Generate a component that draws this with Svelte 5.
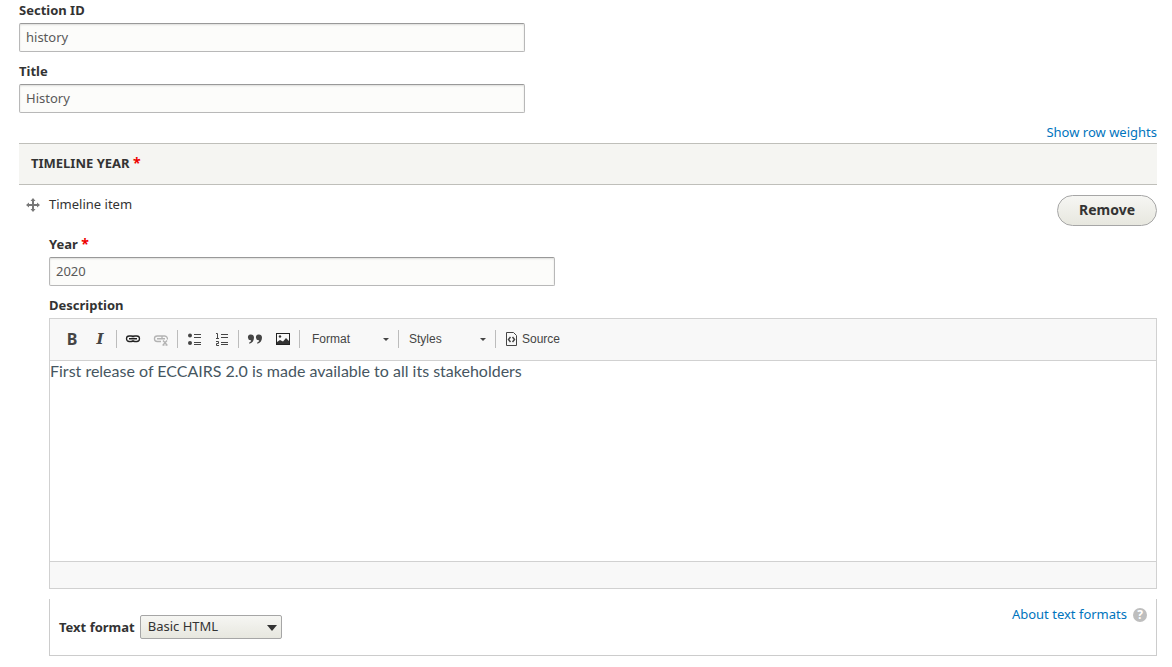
<script>
  let sectionId = $state("history");
  let title = $state("History");
  let year = $state("2020");
  let description = $state("First release of ECCAIRS 2.0 is made available to all its stakeholders");
  let textFormat = $state("Basic HTML");
</script>

<main class="form">
  <div class="field">
    <label for="section-id">Section ID</label>
    <input id="section-id" type="text" bind:value={sectionId} />
  </div>
  <div class="field">
    <label for="title">Title</label>
    <input id="title" type="text" bind:value={title} />
  </div>

  <div class="weights"><a href="#weights">Show row weights</a></div>

  <section>
    <h4 class="table-head">TIMELINE YEAR <span class="required">*</span></h4>
    <div class="row">
      <a class="handle" href="#drag" aria-label="Drag to re-order">
        <svg width="14" height="14" viewBox="0 0 14 14">
          <path fill="#787878" d="M7 0l2.500 3H8v3h3V4.500L14 7l-3 2.500V8H8v3h1.500L7 14l-2.500-3H6V8H3v1.500L0 7l3-2.500V6h3V3H4.500z" />
        </svg>
      </a>
      <div class="item">
        <div class="item-head">
          <span>Timeline item</span>
          <button type="button" class="remove">Remove</button>
        </div>

        <div class="field">
          <label for="year">Year <span class="required">*</span></label>
          <input id="year" type="text" bind:value={year} />
        </div>

        <div class="field">
          <label for="description">Description</label>
          <div class="editor">
            <div class="toolbar">
              <button type="button" class="tool bold" aria-label="Bold">B</button>
              <button type="button" class="tool italic" aria-label="Italic">I</button>
              <span class="separator"></span>
              <button type="button" class="tool" aria-label="Link">
                <svg width="16" height="16" viewBox="0 0 16 16" fill="none">
                  <rect x="1.500" y="5" width="7.500" height="5.500" rx="2.700" stroke="#222" stroke-width="1.300" />
                  <rect x="7" y="5" width="7.500" height="5.500" rx="2.700" stroke="#222" stroke-width="1.300" />
                  <path d="M4 7.750h8" stroke="#f8f8f8" stroke-width="3" />
                  <path d="M4 7.750h8" stroke="#111" stroke-width="1.400" />
                </svg>
              </button>
              <button type="button" class="tool" aria-label="Unlink" disabled>
                <svg width="16" height="16" viewBox="0 0 16 16" fill="none" stroke="#b3b3b3">
                  <path d="M8.500 5H4.200a2.750 2.750 0 0 0 0 5.500H8M7.500 5h4.300a2.750 2.750 0 0 1 2.500 3.500" stroke-width="1.300" />
                  <path d="M4 7.750h8M9 5v2" stroke-width="1.300" />
                  <path d="M10 9.500l4 4.500M14 9.500l-4 4.500M9.500 14h2M12.500 14h2" stroke-width="1.300" />
                </svg>
              </button>
              <span class="separator"></span>
              <button type="button" class="tool" aria-label="Bulleted list">
                <svg width="16" height="16" viewBox="0 0 16 16" fill="#454545">
                  <circle cx="4" cy="4.500" r="2" />
                  <circle cx="4" cy="12" r="2" />
                  <path d="M8 3h7v1H8zM8 6h7v1H8zM8 11h7v1H8zM8 13h7v1H8z" />
                </svg>
              </button>
              <button type="button" class="tool" aria-label="Numbered list">
                <svg width="16" height="16" viewBox="0 0 16 16">
                  <path d="M2 2.500h1.500V7M2 7.500h3M2 10.500h2.500v2h-2v2H5" fill="none" stroke="#454545" />
                  <path d="M7 3h7v1H7zM7 6h7v1H7zM7 11h7v1H7zM7 13h7v1H7z" fill="#454545" />
                </svg>
              </button>
              <span class="separator"></span>
              <button type="button" class="tool" aria-label="Block quote">
                <svg width="16" height="16" viewBox="0 0 16 16" fill="#454545">
                  <path d="M3.500 3.500C5.500 3.300 7 4.500 7 6.500c0 3-1.500 5.300-4.500 6.300l-.5-1c1.400-.6 2-1.500 2.200-2.500A2.900 2.900 0 0 1 3.500 3.500z" />
                  <path d="M11.500 3.500C13.500 3.300 15 4.500 15 6.500c0 3-1.500 5.300-4.500 6.300l-.5-1c1.400-.6 2-1.500 2.200-2.500A2.900 2.900 0 0 1 11.500 3.500z" />
                </svg>
              </button>
              <button type="button" class="tool" aria-label="Image">
                <svg width="16" height="16" viewBox="0 0 16 16">
                  <rect x="1.500" y="2.500" width="13" height="11" fill="#f8f8f8" stroke="#222" />
                  <path d="M2 13v-2l3-2 3 1.500L11 7l3 3v3z" fill="#333" />
                  <circle cx="5" cy="5.500" r="1.200" fill="#333" />
                </svg>
              </button>
              <span class="separator"></span>
              <span class="combo format">
                <select aria-label="Format"><option>Format</option></select>
              </span>
              <span class="separator"></span>
              <span class="combo">
                <select aria-label="Styles"><option>Styles</option></select>
              </span>
              <span class="separator"></span>
              <button type="button" class="tool source">
                <svg width="16" height="16" viewBox="0 0 16 16" fill="none" stroke="#454545">
                  <path d="M2.500 1.500h7l3 3v10h-10z" />
                  <path d="M6.500 6l-2 2.500 2 2.500M8.500 6l2 2.500-2 2.500" stroke-width="1.500" />
                </svg>
                Source
              </button>
            </div>
            <textarea id="description" spellcheck="false" bind:value={description}></textarea>
            <div class="status"></div>
          </div>
        </div>

        <div class="filter">
          <div class="format-field">
            <label for="text-format">Text format</label>
            <span class="select">
              <select id="text-format" bind:value={textFormat}>
                <option>Basic HTML</option>
                <option>Full HTML</option>
              </select>
            </span>
          </div>
          <a class="about" href="#formats">
            About text formats
            <span class="help">?</span>
          </a>
        </div>
      </div>
    </div>
  </section>
</main>

<style>
  :global(body) {
    margin: 0;
    background: #fff;
  }

  .form {
    padding: 0 15px 11px 19px;
    color: #333;
    font: 13px/21px "Noto Sans", "Open Sans", sans-serif;
  }

  .field {
    display: flex;
    flex-direction: column;
    gap: 2px;
    margin-bottom: 9px;
  }

  label {
    font-weight: 700;
  }

  input {
    box-sizing: border-box;
    width: 506px;
    max-width: 100%;
    height: 29px;
    padding: 0 6px 2px;
    border: 1px solid #b8b8b8;
    border-top-color: #999;
    border-radius: 2px;
    background: #fcfcfa;
    box-shadow: inset 0 1px 2px rgba(0, 0, 0, 0.125);
    color: #595959;
    font: inherit;
  }

  a {
    color: #0074bd;
    text-decoration: none;
  }

  .weights {
    text-align: right;
  }

  .required {
    color: #ee0000;
    font-size: 14px;
    line-height: 16px;
  }

  .table-head {
    margin: 0;
    padding: 9px 12px 10px;
    border-top: 1px solid #bfbfba;
    border-bottom: 1px solid #bfbfba;
    background: #f5f5f2;
    font-size: 13px;
    line-height: 21px;
  }

  .row {
    display: flex;
    padding-top: 10px;
  }

  .handle {
    flex: none;
    width: 23px;
    padding: 3px 0 0 7px;
  }

  svg {
    display: block;
    flex: none;
  }

  .item {
    flex: 1;
    min-width: 0;
  }

  .item-head {
    display: flex;
    justify-content: space-between;
    align-items: flex-start;
    margin-bottom: 8px;
    line-height: 18px;
  }

  button {
    color: inherit;
    cursor: pointer;
  }

  .remove {
    height: 31px;
    padding: 0 21px 2px;
    border: 1px solid #a6a6a6;
    border-radius: 16px;
    background: linear-gradient(#f6f6f3, #e7e7df);
    font: 700 14px/20px "Noto Sans", "Open Sans", sans-serif;
  }

  .editor {
    border: 1px solid #d1d1d1;
  }

  .toolbar {
    display: flex;
    align-items: center;
    height: 39px;
    padding: 0 8px 2px;
    border-bottom: 1px solid #d1d1d1;
    background: #f8f8f8;
    color: #454545;
    font: 12px/18px "Liberation Sans", Arial, sans-serif;
  }

  .tool {
    display: flex;
    align-items: center;
    justify-content: center;
    flex: none;
    width: 28px;
    height: 28px;
    padding: 0;
    border: 0;
    background: none;
    font: inherit;
  }

  .bold {
    font: 700 16px/18px "Noto Sans", sans-serif;
  }

  .italic {
    font: italic 700 15px/18px "DejaVu Serif", serif;
  }

  .source {
    gap: 2px;
    width: auto;
    padding: 0 6px;
  }

  .separator {
    flex: none;
    width: 1px;
    height: 18px;
    margin: 0 2px;
    background: #bcbcbc;
  }

  .combo,
  .select {
    position: relative;
    display: inline-block;
  }

  .combo {
    width: 92px;
  }

  .combo.format {
    margin-left: 2px;
  }

  .combo::after,
  .select::after {
    content: "";
    position: absolute;
    pointer-events: none;
  }

  .combo::after {
    top: 12px;
    right: 7px;
    border: 3px solid transparent;
    border-top-color: #454545;
    border-bottom: 0;
  }

  select {
    appearance: none;
    box-sizing: border-box;
    width: 100%;
    border: 0;
    background: none;
    color: inherit;
    font: inherit;
  }

  .combo select {
    height: 26px;
    padding: 0 8px;
  }

  textarea {
    display: block;
    box-sizing: border-box;
    width: 100%;
    height: 200px;
    padding: 0;
    border: 0;
    outline: 0;
    resize: none;
    color: #465661;
    font: 16px/19px Lato, sans-serif;
  }

  .status {
    height: 26px;
    border-top: 1px solid #d1d1d1;
    background: #f8f8f8;
  }

  .filter {
    display: flex;
    justify-content: space-between;
    align-items: flex-start;
    margin-top: 10px;
    padding: 5px 9px 16px;
    border: 1px solid #ccc;
    border-top: 0;
  }

  .format-field {
    display: flex;
    align-items: center;
    gap: 5px;
    padding-top: 11px;
  }

  .select {
    width: 142px;
  }

  .select select {
    display: block;
    height: 24px;
    padding: 0 7px 2px;
    border: 1px solid #a6a6a6;
    border-radius: 2px;
    background: linear-gradient(#f6f6f3, #e7e7df);
  }

  .select::after {
    top: 10px;
    right: 5px;
    border: 5px solid transparent;
    border-top: 6px solid #333;
    border-bottom: 0;
  }

  .about {
    display: flex;
    align-items: center;
    gap: 6px;
  }

  .help {
    width: 14px;
    height: 14px;
    border-radius: 50%;
    background: #bebebe;
    color: #fff;
    font-size: 12px;
    font-weight: 700;
    line-height: 14px;
    text-align: center;
  }
</style>
